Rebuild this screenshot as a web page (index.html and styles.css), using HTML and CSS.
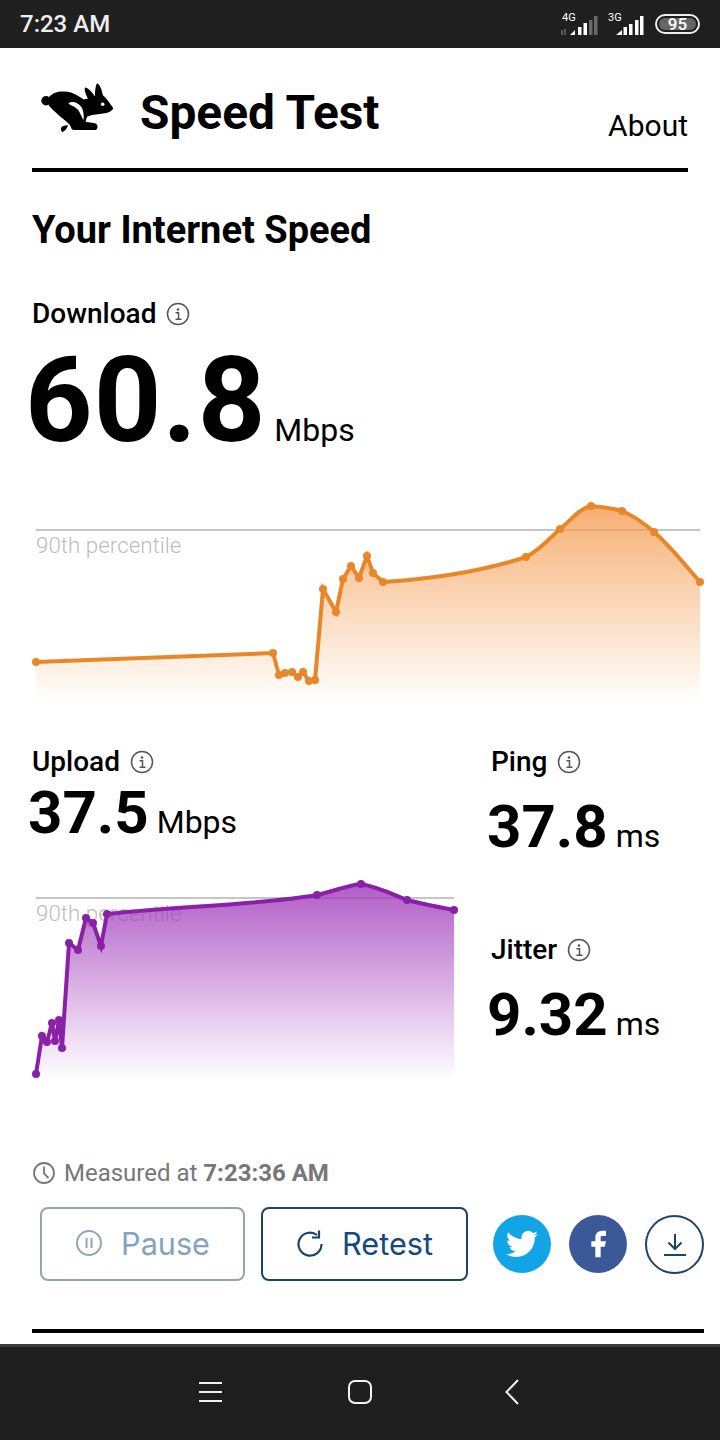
FILE: index.html

```html
<!DOCTYPE html>
<html lang="en">
<head>
  <meta charset="UTF-8">
  <title>Speed Test</title>
  <link rel="stylesheet" href="styles.css">
</head>
<body>
  <div class="status">
    <span class="time">7:23 AM</span>
    <div class="status-icons">
      <svg class="signal-a" viewBox="558 8 42 28">
        <text x="562" y="19" class="net">4G</text>
        <path d="M562 28v5M565 27v6" stroke="#999" stroke-width="1" fill="none"/>
        <path d="M570 33l5-5v5zM578 25h3.5v8H578zM583.500 21h3.500v12h-3.500z" fill="#fff"/>
        <path d="M589 18h3.500v15H589zM594 14h3.500v19H594z" fill="#6a6a6a"/>
      </svg>
      <svg class="signal-b" viewBox="606 8 40 28">
        <text x="608" y="19" class="net">3G</text>
        <path d="M616 33l6-5v5zM623.500 25h3.500v8h-3.500zM629 22h3.500v11H629zM635 18h3.500v15H635zM640 14h3.500v19H640z" fill="#fff"/>
      </svg>
      <span class="battery"><span class="level">95</span></span>
    </div>
  </div>

  <div class="page">
    <div class="header">
      <svg class="logo" viewBox="40 80 76 52">
        <circle cx="46" cy="100.700" r="4.700" fill="#000"/>
        <path d="M49 97C53 93 57 91.500 62 91.500C68 91 74 93 79 96.500L84 99.500L88 98.500C86 95 84 90 85 87.500C88 87.500 92 92 95 96.500C95 91 95.500 85 97.300 83.300C100 85 102 90 102.700 95C106 98 110 103 113.300 108.300C112 111 108 113 105 113.300L92 115L87 116.700L85.500 121.700L95 123.300C97 124 98 126 97.300 128C97 129.500 96 130 95 130H74C72 130 71 128 70 125C65 120 60 117 56.700 113.300C53 110 50 107 48.500 105Z" fill="#000"/>
        <path d="M68.300 103.300C73 100 79 103 82 108C84 113 84 118 83.500 120C81 116 80 111 76 108C73 106 70 105 68.300 103.300Z" fill="#fff"/>
        <circle cx="102.700" cy="104.300" r="1.800" fill="#fff"/>
        <path d="M68 125C67 129 64 132 62 132C60 129 61 127 63 126Z" fill="#000"/>
      </svg>
      <span class="brand">Speed Test</span>
      <a class="about">About</a>
    </div>

    <h1>Your Internet Speed</h1>

    <div class="label label-main">Download
      <svg class="info" viewBox="0 0 24 24"><use href="#info-icon"/></svg>
    </div>
    <div class="value value-big"><b>60.8</b><span>Mbps</span></div>

    <svg class="chart-down" viewBox="32 490 680 220">
      <defs>
        <linearGradient id="orange-fill" x1="0" y1="0" x2="0" y2="1">
          <stop offset="0" stop-color="#f49a4e" stop-opacity=".8"/>
          <stop offset="1" stop-color="#f7a25a" stop-opacity="0"/>
        </linearGradient>
        <linearGradient id="purple-fill" x1="0" y1="0" x2="0" y2="1">
          <stop offset="0" stop-color="#a43fbd" stop-opacity=".85"/>
          <stop offset="1" stop-color="#a43fbd" stop-opacity="0"/>
        </linearGradient>
        <symbol id="info-icon" viewBox="0 0 24 24">
          <circle cx="12" cy="12" r="10.500" fill="none" stroke="#555" stroke-width="1.500"/>
          <circle cx="12" cy="7.500" r="1.300" fill="#555"/>
          <path d="M9.500 10.800H12.500V17M9.500 17.300h6" fill="none" stroke="#555" stroke-width="1.500"/>
        </symbol>
      </defs>
      <path d="M36 530H700" stroke="#c6c6c6" stroke-width="2"/>
      <text x="36" y="553" class="pct">90th percentile</text>
      <path fill="url(#orange-fill)" d="M36 662L273 653 279 675 285 673 292 672 298 677 303 672 309 681 315 680 323 589 336 612 343 579 351 566 359 578 367 556 373 573 383 582C430 579 480 572 526 557C540 550 550 538 560 529C572 519 580 508 591 506C602 507 612 508 622 511C634 516 645 524 654 532C672 548 686 566 700 582V705H36Z"/>
      <path class="line-orange" d="M36 662L273 653 279 675 285 673 292 672 298 677 303 672 309 681 315 680 323 589 336 612 343 579 351 566 359 578 367 556 373 573 383 582C430 579 480 572 526 557C540 550 550 538 560 529C572 519 580 508 591 506C602 507 612 508 622 511C634 516 645 524 654 532C672 548 686 566 700 582"/>
      <g fill="#e8862a">
        <circle cx="36" cy="662" r="4"/><circle cx="273" cy="653" r="4"/><circle cx="279" cy="675" r="4"/><circle cx="285" cy="673" r="4"/><circle cx="292" cy="672" r="4"/><circle cx="298" cy="677" r="4"/><circle cx="303" cy="672" r="4"/><circle cx="309" cy="681" r="4"/><circle cx="315" cy="680" r="4"/><circle cx="323" cy="589" r="4"/><circle cx="336" cy="612" r="4"/><circle cx="343" cy="579" r="4"/><circle cx="351" cy="566" r="4"/><circle cx="359" cy="578" r="4"/><circle cx="367" cy="556" r="4"/><circle cx="373" cy="573" r="4"/><circle cx="383" cy="582" r="4"/><circle cx="526" cy="557" r="4"/><circle cx="560" cy="529" r="4"/><circle cx="591" cy="506" r="4"/><circle cx="622" cy="511" r="4"/><circle cx="654" cy="532" r="4"/><circle cx="700" cy="582" r="4"/>
      </g>
    </svg>

    <div class="lower">
      <div class="upload">
        <div class="label">Upload
          <svg class="info" viewBox="0 0 24 24"><use href="#info-icon"/></svg>
        </div>
        <div class="value value-mid"><b>37.5</b><span>Mbps</span></div>
        <svg class="chart-up" viewBox="32 870 440 220">
          <path d="M36 898H454" stroke="#c6c6c6" stroke-width="2"/>
          <text x="36" y="921" class="pct">90th percentile</text>
          <path fill="url(#purple-fill)" d="M36 1074L42 1036 47 1042 52 1023 55 1041 59 1020 62 1048 69 943 78 950 86 918 93 923 101 946 107 914C180 906 260 905 317 895C335 891 348 885 361 884C378 887 392 894 407 900C422 904 438 907 454 910V1080H36Z"/>
          <path class="line-purple" d="M36 1074L42 1036 47 1042 52 1023 55 1041 59 1020 62 1048 69 943 78 950 86 918 93 923 101 946 107 914C180 906 260 905 317 895C335 891 348 885 361 884C378 887 392 894 407 900C422 904 438 907 454 910"/>
          <g fill="#8a20a8">
            <circle cx="36" cy="1074" r="4"/><circle cx="42" cy="1036" r="4"/><circle cx="47" cy="1042" r="4"/><circle cx="52" cy="1023" r="4"/><circle cx="55" cy="1041" r="4"/><circle cx="59" cy="1020" r="4"/><circle cx="62" cy="1048" r="4"/><circle cx="69" cy="943" r="4"/><circle cx="78" cy="950" r="4"/><circle cx="86" cy="918" r="4"/><circle cx="93" cy="923" r="4"/><circle cx="101" cy="946" r="4"/><circle cx="107" cy="914" r="4"/><circle cx="317" cy="895" r="4"/><circle cx="361" cy="884" r="4"/><circle cx="407" cy="900" r="4"/><circle cx="454" cy="910" r="4"/>
          </g>
        </svg>
      </div>

      <div class="side">
        <div class="label">Ping
          <svg class="info" viewBox="0 0 24 24"><use href="#info-icon"/></svg>
        </div>
        <div class="value value-side"><b>37.8</b><span>ms</span></div>
        <div class="label label-jitter">Jitter
          <svg class="info" viewBox="0 0 24 24"><use href="#info-icon"/></svg>
        </div>
        <div class="value value-side"><b>9.32</b><span>ms</span></div>
      </div>
    </div>

    <div class="measured">
      <svg class="clock" viewBox="0 0 24 24">
        <circle cx="12" cy="12" r="10" fill="none" stroke="#777" stroke-width="1.800"/>
        <path d="M12 5.500V12.500L16.500 17" fill="none" stroke="#777" stroke-width="1.800"/>
      </svg>
      <span>Measured at <b>7:23:36 AM</b></span>
    </div>

    <div class="actions">
      <button class="btn btn-pause">
        <svg class="btn-icon" viewBox="0 0 28 28">
          <circle cx="14" cy="14" r="12" fill="none" stroke="#8fa6b8" stroke-width="2"/>
          <path d="M11.500 9v10M16.500 9v10" stroke="#8fa6b8" stroke-width="2"/>
        </svg>
        Pause
      </button>
      <button class="btn btn-retest">
        <svg class="btn-icon" viewBox="0 0 28 28">
          <path d="M21 6A11.500 11.500 0 1 0 25.500 15" fill="none" stroke="#1d4468" stroke-width="2.200"/>
          <path d="M23 1.500V8.500H16" fill="none" stroke="#1d4468" stroke-width="2.200"/>
        </svg>
        Retest
      </button>
      <div class="round round-twitter">
        <svg viewBox="0 0 24 24"><path fill="#fff" d="M23.953 4.570a10 10 0 01-2.825.775 4.958 4.958 0 002.163-2.723c-.951.555-2.005.959-3.127 1.184a4.920 4.920 0 00-8.384 4.482C7.690 8.095 4.067 6.130 1.640 3.162a4.822 4.822 0 00-.666 2.475c0 1.710.870 3.213 2.188 4.096a4.904 4.904 0 01-2.228-.616v.060a4.923 4.923 0 003.946 4.827 4.996 4.996 0 01-2.212.085 4.936 4.936 0 004.604 3.417 9.867 9.867 0 01-6.102 2.105c-.390 0-.779-.023-1.170-.067a13.995 13.995 0 007.557 2.209c9.053 0 13.998-7.496 13.998-13.985 0-.210 0-.420-.015-.630A9.935 9.935 0 0024 4.590z"/></svg>
      </div>
      <div class="round round-fb">
        <svg viewBox="0 0 24 24"><path fill="#fff" d="M18 2h-3a5 5 0 0 0-5 5v3H7v4h3v8h4v-8h3l1-4h-4V7a1 1 0 0 1 1-1h3z"/></svg>
      </div>
      <div class="round round-save">
        <svg viewBox="0 0 28 28">
          <path d="M14 4V19M7.500 12.500L14 19l6.500-6.500M3 25H25" fill="none" stroke="#1d4468" stroke-width="2"/>
        </svg>
      </div>
    </div>

    <div class="rule"></div>
  </div>

  <div class="nav">
    <svg class="nav-menu" viewBox="0 0 23 22"><path d="M0 2H23M0 11H23M0 20H23" stroke="#f2f2f2" stroke-width="2"/></svg>
    <svg class="nav-home" viewBox="0 0 24 24"><rect x="1" y="1" width="22" height="22" rx="6" fill="none" stroke="#f2f2f2" stroke-width="2"/></svg>
    <svg class="nav-back" viewBox="0 0 14 26"><path d="M13 1L1.500 13 13 25" fill="none" stroke="#f2f2f2" stroke-width="2"/></svg>
  </div>
</body>
</html>
```

FILE: styles.css

```css
body { margin: 0; font-family: Roboto, "Liberation Sans", sans-serif; background: #fff; color: #000; }

.status { height: 48px; background: #1f1f1f; display: flex; justify-content: space-between; align-items: center; padding: 0 20px; }
.time { color: #eee; font-size: 24px; font-weight: 500; }
.status-icons { display: flex; align-items: center; }
.signal-a { width: 42px; height: 28px; }
.signal-b { width: 40px; height: 28px; margin-left: 6px; }
.net { font-family: Roboto, sans-serif; font-size: 11px; fill: #fff; }
.battery { width: 45px; height: 20px; box-sizing: border-box; border: 2px solid #eee; border-radius: 10px; margin-left: 9px; padding: 2px; display: flex; }
.level { flex: 1; background: #666; border-radius: 6px; color: #fff; font-size: 17px; font-weight: 500; line-height: 12px; text-align: center; }

.page { height: 1296px; box-sizing: border-box; padding: 0 16px 0 32px; }

.header { height: 120px; margin-right: 16px; border-bottom: 4px solid #000; display: flex; align-items: flex-start; }
.logo { width: 76px; height: 52px; margin: 32px 0 0 8px; }
.brand { font-size: 47.800px; font-weight: 700; line-height: 56px; margin: 37px 0 0 24px; }
.about { font-size: 30px; line-height: 36px; margin: 60px 0 0 auto; }

h1 { font-size: 38px; font-weight: 700; line-height: 42px; margin: 37px 0 0; }

.label { display: flex; align-items: center; font-size: 28px; font-weight: 500; line-height: 30px; }
.label-main { margin-top: 48px; }
.label-jitter { margin-top: 73px; }
.info { width: 24px; height: 24px; margin-left: 10px; }

.value { display: flex; align-items: baseline; }
.value b { font-weight: 700; }
.value span { font-size: 32px; }
.value-big { height: 120px; margin: 12px 0 -4px -7px; }
.value-big b { font-size: 118px; line-height: 120px; letter-spacing: 1px; }
.value-big span { margin-left: 8px; }
.value-mid { height: 70px; margin: 1px 0 0 -4px; }
.value-mid b { font-size: 60px; line-height: 70px; }
.value-mid span { margin-left: 8px; }
.value-side { height: 70px; margin: 15px 0 0 -4px; }
.value-side b { font-size: 60px; line-height: 70px; }
.value-side span { margin-left: 8px; }

svg { display: block; }
.chart-down { width: 680px; height: 220px; margin-top: 33px; }
.chart-up { width: 440px; height: 220px; margin-top: 22px; }
.pct { font-family: Roboto, sans-serif; font-size: 22.400px; font-weight: 300; fill: #bdbdbd; }
.line-orange { fill: none; stroke: #e8862a; stroke-width: 4; }
.line-purple { fill: none; stroke: #8a20a8; stroke-width: 4; }

.lower { display: flex; margin-top: 37px; }
.upload { width: 459px; }

.measured { display: flex; align-items: center; margin-top: 68px; font-size: 24px; line-height: 30px; color: #777; }
.measured b { font-weight: 700; }
.clock { width: 24px; height: 24px; margin-right: 8px; }

.actions { display: flex; align-items: center; margin: 19px 0 0 8px; }
.btn { flex: none; height: 74px; box-sizing: border-box; background: #fff; border-radius: 8px; border: 2px solid; display: flex; align-items: center; justify-content: center; font-family: Inter, Roboto, sans-serif; font-size: 30.600px; padding: 0 0 2px; }
.btn-icon { width: 28px; height: 28px; margin-right: 18px; }
.btn-pause { width: 205px; border-color: #93a6ae; color: #85a2c0; }
.btn-retest { width: 207px; margin-left: 16px; border-color: #1d4468; color: #124a80; }

.round { flex: none; width: 58px; height: 58px; border-radius: 50%; display: flex; align-items: center; justify-content: center; box-sizing: border-box; margin-left: 18px; }
.round svg { width: 32px; height: 32px; }
.round-twitter { margin-left: 25px; background: #12a5e6; }
.round-fb { background: #3b5998; }
.round-save { width: 59px; height: 59px; border: 2px solid #1d4468; }
.round-save svg { width: 28px; height: 28px; }

.rule { height: 4px; background: #000; margin-top: 48px; }

.nav { height: 96px; box-sizing: border-box; background: #1f1f1f; border-top: 3px solid #3a3a3a; display: flex; align-items: center; padding: 0 0 3px 199px; }
.nav-menu { width: 23px; height: 22px; }
.nav-home { width: 24px; height: 24px; margin-left: 126px; }
.nav-back { width: 14px; height: 26px; margin-left: 133px; }
```
